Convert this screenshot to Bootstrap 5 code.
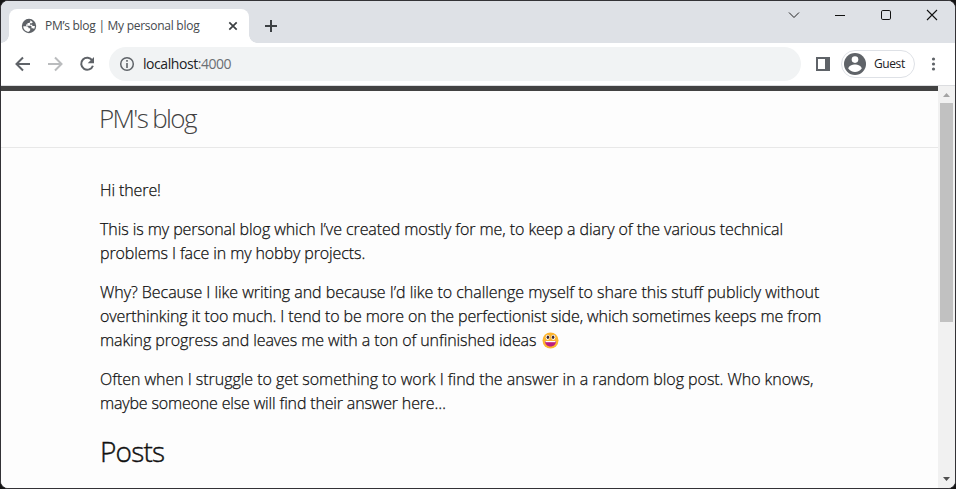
<!DOCTYPE html>
<html lang="en">
<head>
<meta charset="utf-8">
<title>PM's blog | My personal blog</title>
<link href="https://cdn.jsdelivr.net/npm/bootstrap@5.3.0/dist/css/bootstrap.min.css" rel="stylesheet">
<style>
html,body{height:100%;overflow:hidden}
body{background:#151515;font-family:"Open Sans","Noto Sans",sans-serif}
svg{display:block;flex:none}
.win{height:489px;border:1px solid #333236;border-radius:8px;background:#fdfdfd}
.tabstrip{height:42px;background:#dee1e6;padding-left:8px}
.tab{width:240px;height:34px;margin-top:8px;background:#fff;border-radius:8px 8px 0 0;padding:0 10px 0 12px;position:relative}
.tab::before,.tab::after{content:"";position:absolute;bottom:0;width:8px;height:8px}
.tab::before{left:-8px;background:radial-gradient(circle at 0 0,transparent 7.5px,#fff 8px)}
.tab::after{right:-8px;background:radial-gradient(circle at 100% 0,transparent 7.5px,#fff 8px)}
.tab-title{font-size:12px;color:#45494d;margin-left:8px;letter-spacing:-.27px}
.newtab{margin-top:18px}
.winctl{height:28px;gap:28px;padding-right:14px}
.toolbar{height:43px;background:#fff;border-bottom:1px solid #dcdde0;padding:0 13px}
.reload{margin-left:13px}
.omni{width:692px;height:34px;background:#f1f3f4;margin-left:14px;padding-left:10px;font-size:14px;color:#202124;letter-spacing:-.44px}
.omni span{margin-top:-1px}
.omni .port{color:#6a6e73}
.panel{margin-left:15px}
.guest{width:74px;height:28px;border:1px solid #dee1e6;font-size:12px;color:#202124;gap:8px;padding-left:2px;margin-left:11px;letter-spacing:-.4px}
.page{border-top:5px solid #424242;background:#fdfdfd}
.site-head{height:57px;border-bottom:1px solid #e8e8e8;padding-left:98px}
.site-title{font-size:26px;font-weight:300;letter-spacing:-1.65px;line-height:54px;color:#424242}
.post-body{padding:30px 0 0 99px;font-size:16px;line-height:24px;color:#111;font-weight:300;-webkit-text-stroke:.25px #111}
.post-body p{margin-bottom:15px;white-space:nowrap}
.post-body h2{font-size:28px;font-weight:300;line-height:42px;margin:0;color:#111;letter-spacing:-.8px;-webkit-text-stroke:.4px #111}
.l0{letter-spacing:-.1px}
.l1{letter-spacing:-.07px}
.l2{letter-spacing:-.1px}
.l3{letter-spacing:-.03px}
.l4{letter-spacing:-.1px}
.l5{letter-spacing:-.09px}
.l6{letter-spacing:-.04px}
.l7{letter-spacing:-.16px}
.emoji{display:inline-block;vertical-align:-3px;margin-left:1px}
.sbar{width:17px;background:#f1f1f1;padding:0 2px}
.thumb{height:219px;background:#c1c1c1;width:13px}
</style>
</head>
<body>
<div class="win d-flex flex-column overflow-hidden">
  <div class="tabstrip d-flex flex-shrink-0">
    <div class="tab d-flex align-items-center">
      <svg width="16" height="16" viewBox="0 0 16 16"><circle cx="8" cy="8" r="7.2" fill="#5f6368"/><path d="M2.300 8.300h3.400c1.200 0 1.900.8 1.900 1.900h1.600v2.100L7.800 13.800C4.800 13.800 2.200 11.400 2.300 8.300zM9.300 2.300v1.200c0 .9-.6 1.400-1.400 1.400H6.500v1.500H5v1.300h4.300c.8 0 1.200.5 1.200 1.200v1.300h1.300c.6 0 1 .3 1.300.8.500-.8.800-1.800.8-2.900h-2.600V6.700H9V5.200h1.400c.8 0 1.200-.6 1.200-1.300z" fill="#fff"/></svg>
      <span class="tab-title text-nowrap">PM’s blog | My personal blog</span>
      <svg class="ms-auto" width="12" height="12" viewBox="0 0 12 12" stroke="#3c4043" stroke-width="1.7"><path d="M2.300 2.300l7.400 7.400M9.700 2.300L2.300 9.700"/></svg>
    </div>
    <svg class="newtab ms-3" width="14" height="14" viewBox="0 0 14 14" stroke="#3c4043" stroke-width="2"><path d="M6 1v12M0 7h12"/></svg>
    <div class="winctl d-flex align-items-center ms-auto">
      <svg width="18" height="18" viewBox="0 0 18 18" fill="none" stroke="#222"><path d="M4 6.500l5 5 5-5"/></svg>
      <svg width="18" height="18" viewBox="0 0 18 18" stroke="#111"><path d="M4 9.500h10"/></svg>
      <svg width="18" height="18" viewBox="0 0 18 18" fill="none" stroke="#111"><rect x="4.500" y="4.500" width="9" height="9" rx="1.300"/></svg>
      <svg width="18" height="18" viewBox="0 0 18 18" stroke="#111" stroke-width="1.100"><path d="M4 4l10 10M14 4L4 14"/></svg>
    </div>
  </div>
  <div class="toolbar d-flex align-items-center flex-shrink-0">
    <svg width="18" height="16" viewBox="0 0 18 16" fill="none" stroke="#5f6368" stroke-width="2"><path d="M16 8H3.500M9 1.500L2.500 8 9 14.500"/></svg>
    <svg class="ms-3" width="18" height="16" viewBox="0 0 18 16" fill="none" stroke="#babcbe" stroke-width="2"><path d="M0 8h12.500M7 1.500L13.500 8 7 14.500"/></svg>
    <svg class="reload" width="16" height="16" viewBox="0 0 16 16"><path d="M13.300 4.600A6 6 0 1 0 13.900 9.700" fill="none" stroke="#5f6368" stroke-width="2"/><path d="M15 1v6.300H8.700z" fill="#5f6368"/></svg>
    <div class="omni rounded-pill d-flex align-items-center">
      <svg class="me-2" width="16" height="16" viewBox="0 0 16 16"><circle cx="8" cy="8" r="6.300" fill="none" stroke="#5f6368" stroke-width="1.500"/><path d="M8 4v1.700M8 7v5" stroke="#5f6368" stroke-width="1.600"/></svg>
      <span>localhost<span class="port">:4000</span></span>
    </div>
    <svg class="panel" width="14" height="14" viewBox="0 0 14 14"><path fill="#5f6368" fill-rule="evenodd" d="M0 0h14v14H0zM2 2v10h7V2z"/></svg>
    <div class="guest rounded-pill d-flex align-items-center">
      <svg width="22" height="22" viewBox="0 0 22 22"><circle cx="11" cy="11" r="11" fill="#5f6368"/><circle cx="11" cy="6.600" r="3.300" fill="#fff"/><path d="M4.400 15.500c0-2.500 4.200-3.900 6.600-3.900s6.600 1.400 6.600 3.900c-1.400 2.200-3.800 3.600-6.600 3.600s-5.200-1.400-6.600-3.600z" fill="#fff"/></svg>
      <span>Guest</span>
    </div>
    <svg class="ms-auto" width="16" height="16" viewBox="0 0 16 16" fill="#5f6368"><circle cx="7.500" cy="3" r="1.600"/><circle cx="7.500" cy="8" r="1.600"/><circle cx="7.500" cy="13" r="1.600"/></svg>
  </div>
  <div class="d-flex flex-grow-1">
    <main class="page flex-grow-1">
      <header class="site-head"><div class="site-title">PM's blog</div></header>
      <div class="post-body">
        <p><span class="l0">Hi there!</span></p>
        <p><span class="l1">This is my personal blog which I’ve created mostly for me, to keep a diary of the various technical</span><br><span class="l2">problems I face in my hobby projects.</span></p>
        <p><span class="l3">Why? Because I like writing and because I’d like to challenge myself to share this stuff publicly without</span><br><span class="l4">overthinking it too much. I tend to be more on the perfectionist side, which sometimes keeps me from</span><br><span class="l5">making progress and leaves me with a ton of unfinished ideas</span> <svg class="emoji" width="17" height="17" viewBox="0 0 17 17"><circle cx="8.500" cy="8.500" r="8" fill="#fdb52f"/><ellipse cx="5.700" cy="5.300" rx="2" ry="2.600" fill="#fff"/><ellipse cx="11.300" cy="5.300" rx="2" ry="2.600" fill="#fff"/><ellipse cx="5.900" cy="5.300" rx="1.300" ry="1.800" fill="#402a32"/><ellipse cx="11.100" cy="5.300" rx="1.300" ry="1.800" fill="#402a32"/><path d="M3 9h11c0 3.300-2.300 5.500-5.500 5.500S3 12.300 3 9z" fill="#bb1d80"/><path d="M3.500 9h10v1.200h-10z" fill="#fff"/></svg></p>
        <p><span class="l6">Often when I struggle to get something to work I find the answer in a random blog post. Who knows,</span><br><span class="l7">maybe someone else will find their answer here…</span></p>
        <h2>Posts</h2>
      </div>
    </main>
    <div class="sbar d-flex flex-column align-items-center">
      <svg width="13" height="17" viewBox="0 0 13 17"><path d="M3 11h7L6.500 7z" fill="#a3a3a3"/></svg>
      <div class="thumb"></div>
      <svg class="mt-auto" width="13" height="17" viewBox="0 0 13 17"><path d="M3 6h7L6.500 10z" fill="#505050"/></svg>
    </div>
  </div>
</div>
<script src="https://cdn.jsdelivr.net/npm/bootstrap@5.3.0/dist/js/bootstrap.bundle.min.js"></script>
</body>
</html>
